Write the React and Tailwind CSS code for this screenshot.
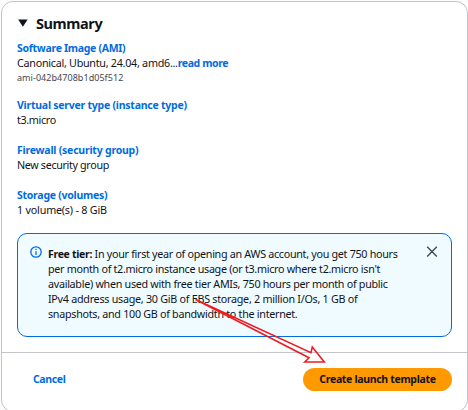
import React from "react";

function Field({ label, children, className = "" }) {
  return (
    <div className={className}>
      <div className="text-[10.5px] font-bold text-[#006ce0]">{label}</div>
      <div>{children}</div>
    </div>
  );
}

function Line({ children, className = "" }) {
  return <span className={`block w-max whitespace-nowrap ${className}`}>{children}</span>;
}

export default function App() {
  return (
    <div className="relative h-[410px] w-[468px] overflow-hidden bg-[#fcfcfd] pl-px pt-px font-['Noto_Sans','Open_Sans',sans-serif] text-[10.75px] leading-[15px] text-[#0f141a]">
      <section className="flex h-[411px] w-[467px] flex-col rounded-[12px] border border-[#c1c4c9] bg-white">
        <div className="h-[351px] border-b border-[#c1c4c9] px-[15px] pt-[11px]">
          <header className="flex h-[20px] items-center gap-[8px] pl-[1px]">
            <svg width="10" height="8" viewBox="0 0 10 8" className="shrink-0" fill="#0f141a">
              <path d="M.2.5h9.4L4.9 7.8z" />
            </svg>
            <h2 className="text-[14.5px] font-bold leading-[20px] tracking-[-0.4px]">Summary</h2>
          </header>
          <Field className="mt-[8px]" label={<Line className="tracking-[-0.3px]">Software Image (AMI)</Line>}>
            <span className="flex whitespace-nowrap">
              <Line className="tracking-[-0.27px]">Canonical, Ubuntu, 24.04, amd6...</Line>
              <Line className="text-[10.5px] font-bold tracking-[-0.38px] text-[#006ce0]">read more</Line>
            </span>
            <Line className="text-[9px] leading-[14px] tracking-[0.05px] text-[#424650]">ami-042b4708b1d05f512</Line>
          </Field>
          <Field className="mt-[13px]" label={<Line className="tracking-[-0.24px]">Virtual server type (instance type)</Line>}>
            <Line className="tracking-[-0.35px]">t3.micro</Line>
          </Field>
          <Field className="mt-[15px]" label={<Line className="tracking-[-0.22px]">Firewall (security group)</Line>}>
            <Line className="tracking-[-0.35px]">New security group</Line>
          </Field>
          <Field className="mt-[15px]" label={<Line className="tracking-[-0.26px]">Storage (volumes)</Line>}>
            <Line className="tracking-[-0.2px]">1 volume(s) - 8 GiB</Line>
          </Field>
          <div className="mt-[15px] flex h-[104px] w-[435px] rounded-[10px] border border-[#006ce0] bg-[#f0fbff] pl-[12px] pr-[13px] pt-[12px]">
            <svg width="12" height="12" viewBox="0 0 12 12" className="mr-[6px] shrink-0" fill="none" stroke="#006ce0" strokeWidth="1.3">
              <circle cx="6" cy="6" r="5.2" />
              <path d="M6 2.8v1.3M6 5.2v3.8" />
            </svg>
            <p className="min-w-0 flex-1 pt-px tracking-[-0.29px]">
              <Line className="tracking-[-0.3px]"><b className="text-[10.5px]">Free tier:</b> In your first year of opening an AWS account, you get 750 hours</Line>
              <Line className="tracking-[-0.3px]">per month of t2.micro instance usage (or t3.micro where t2.micro isn't</Line>
              <Line>available) when used with free tier AMIs, 750 hours per month of public</Line>
              <Line className="tracking-[-0.27px]">IPv4 address usage, 30 GiB of EBS storage, 2 million I/Os, 1 GB of</Line>
              <Line>snapshots, and 100 GB of bandwidth to the internet.</Line>
            </p>
            <svg width="12" height="12" viewBox="0 0 12 12" className="shrink-0" fill="none" stroke="#424650" strokeWidth="1.4">
              <path d="M1.2.8l9.6 9.6M10.8.8L1.2 10.4" />
            </svg>
          </div>
        </div>
        <footer className="flex items-center justify-between pl-[31px] pr-[15px] pt-[15px] text-[10.5px] font-bold">
          <button className="text-[#006ce0]"><Line className="tracking-[-0.38px]">Cancel</Line></button>
          <button className="flex h-[23px] w-[149px] items-center justify-center rounded-full bg-[#ff9900]"><Line className="tracking-[-0.32px]">Create launch template</Line></button>
        </footer>
      </section>
      <svg className="pointer-events-none absolute left-0 top-0" width="468" height="410" viewBox="0 0 468 410" fill="none" stroke="#ed1c24" strokeWidth="1.6">
        <path d="M195.5 299.5L311 352.7 312.3 347 324.3 362 304.8 362 309 357.8Z" />
      </svg>
    </div>
  );
}
